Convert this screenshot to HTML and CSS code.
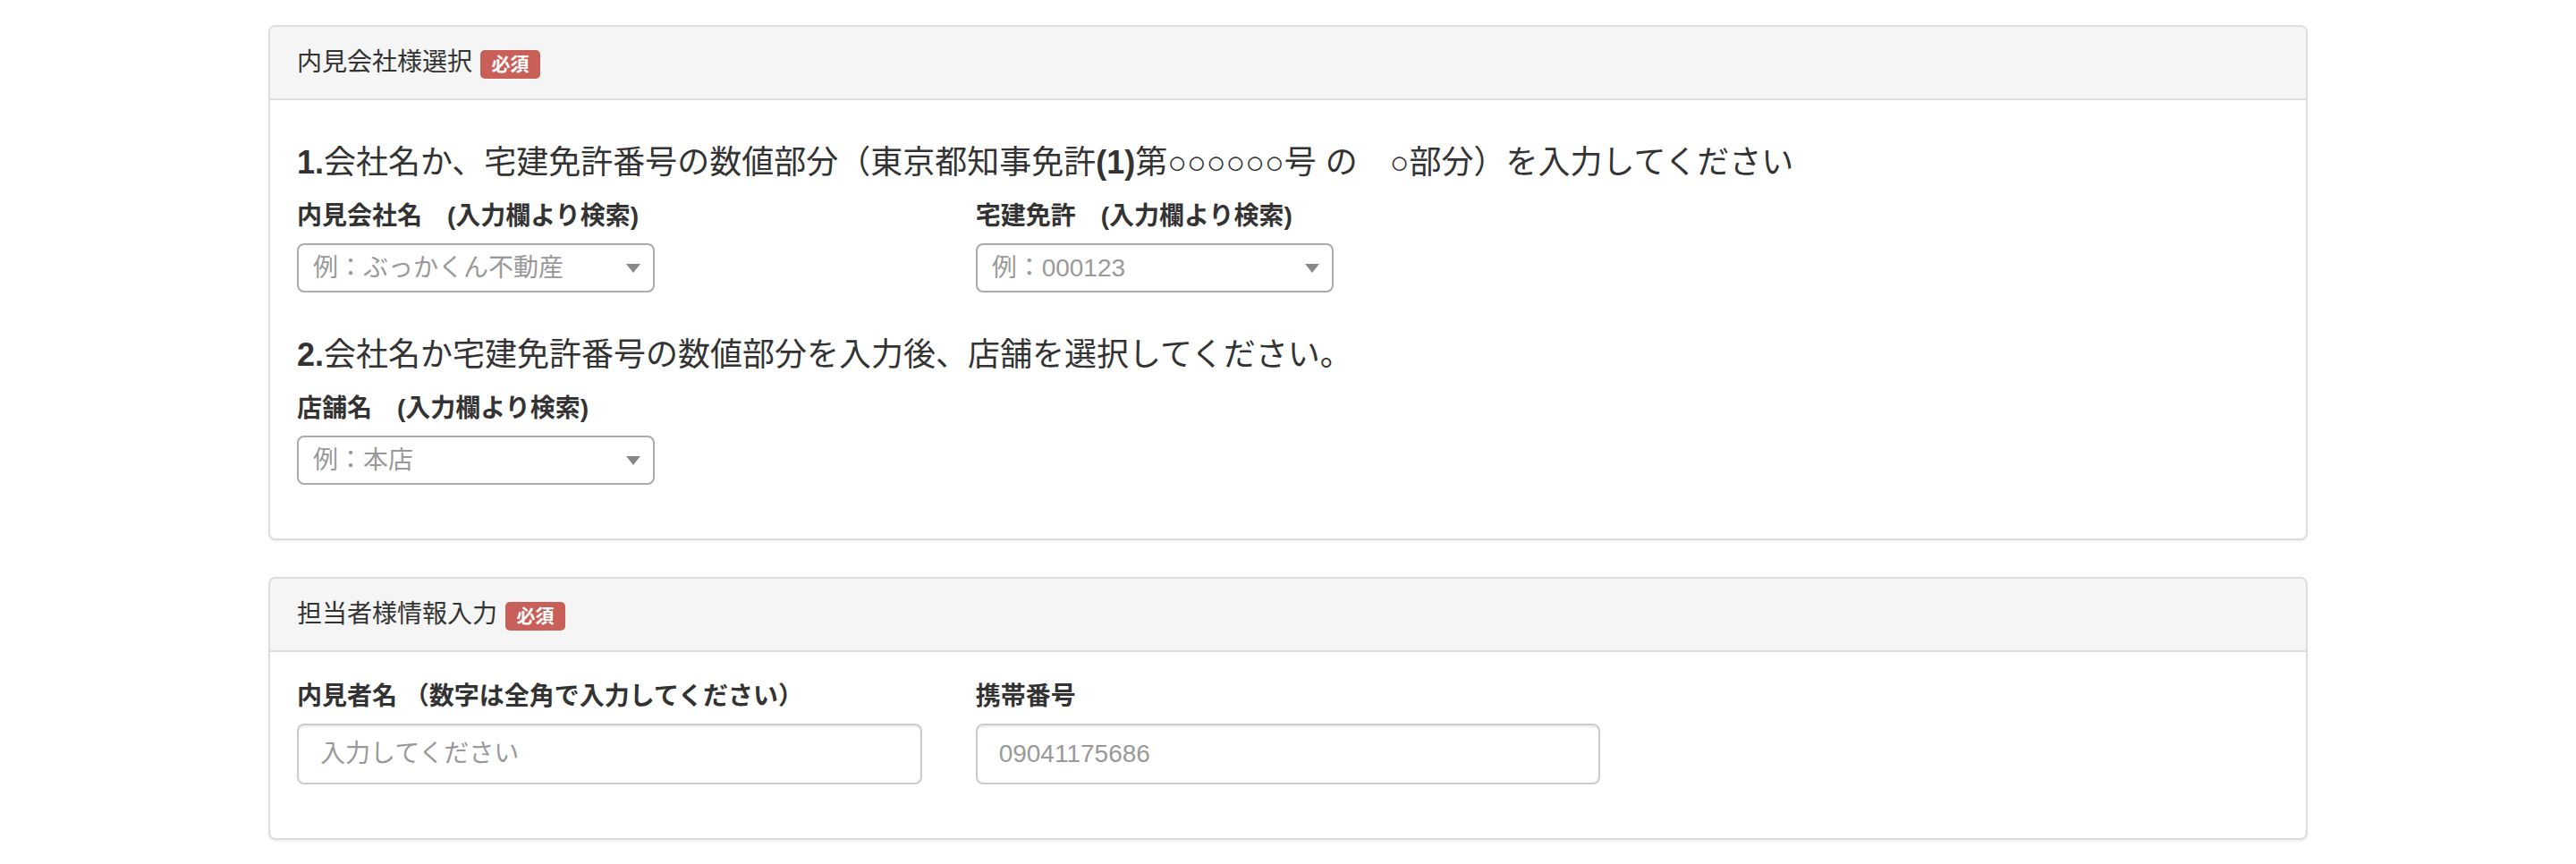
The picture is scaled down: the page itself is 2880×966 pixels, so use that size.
FILE: index.html
```html
<!DOCTYPE html>
<html lang="ja">
<head>
<meta charset="utf-8">
<title>内見予約</title>
<link rel="stylesheet" href="styles.css">
</head>
<body>
<div class="container">
  <section class="panel">
    <div class="panel-heading">
      <span class="panel-title">内見会社様選択</span>
      <span class="badge">必須</span>
    </div>
    <div class="panel-body">
      <h4 class="step"><b class="num">1.</b>会社名か、宅建免許番号の数値部分（東京都知事免許<b class="num">(1)</b>第○○○○○○号 の　○部分）を入力してください</h4>
      <div class="row">
        <div class="form-group">
          <label class="field-label">内見会社名　(入力欄より検索)</label>
          <div class="select"><span class="select-text">例：ぶっかくん不動産</span><span class="select-arrow"></span></div>
        </div>
        <div class="form-group">
          <label class="field-label">宅建免許　(入力欄より検索)</label>
          <div class="select"><span class="select-text">例：000123</span><span class="select-arrow"></span></div>
        </div>
      </div>
      <h4 class="step"><b class="num">2.</b>会社名か宅建免許番号の数値部分を入力後、店舗を選択してください。</h4>
      <div class="row">
        <div class="form-group">
          <label class="field-label">店舗名　(入力欄より検索)</label>
          <div class="select"><span class="select-text">例：本店</span><span class="select-arrow"></span></div>
        </div>
      </div>
    </div>
  </section>

  <section class="panel">
    <div class="panel-heading">
      <span class="panel-title">担当者様情報入力</span>
      <span class="badge">必須</span>
    </div>
    <div class="panel-body">
      <div class="row">
        <div class="form-group">
          <label class="field-label">内見者名 （数字は全角で入力してください）</label>
          <input class="form-control" type="text" placeholder="入力してください">
        </div>
        <div class="form-group">
          <label class="field-label">携帯番号</label>
          <input class="form-control" type="text" placeholder="09041175686">
        </div>
      </div>
    </div>
  </section>
</div>
</body>
</html>
```
FILE: styles.css
```css
html, body {
  margin: 0;
  padding: 0;
  background: #ffffff;
}

body {
  font-family: "Liberation Sans", "Noto Sans CJK JP", sans-serif;
  font-size: 28px;
  line-height: 40px;
  color: #333333;
}

.container {
  width: 2280px;
  margin: 0 auto;
  padding-top: 28px;
}

.panel {
  border: 2px solid #dddddd;
  border-radius: 8px;
  background: #ffffff;
  box-shadow: 0 2px 2px rgba(0, 0, 0, 0.05);
  margin-bottom: 41px;
  overflow: hidden;
}

.panel-heading {
  display: flex;
  align-items: center;
  gap: 9px;
  padding: 20px 30px;
  background: #f5f5f5;
  border-bottom: 2px solid #dddddd;
  color: #333333;
}

.panel-title {
  font-size: 28px;
  line-height: 40px;
}

.badge {
  display: inline-block;
  height: 32px;
  line-height: 32px;
  padding: 0 12.5px;
  margin-top: 3px;
  font-size: 21px;
  font-weight: 700;
  color: #ffffff;
  background: #c95f59;
  border-radius: 5px;
}

.panel-body {
  padding: 30px;
}

.step {
  margin: 20px 0 20px;
  font-size: 36px;
  line-height: 40px;
  font-weight: 400;
  color: #333333;
}

.num {
  font-weight: 700;
}

.row {
  display: grid;
  grid-template-columns: repeat(3, 1fr);
  column-gap: 60px;
}

.form-group {
  margin-bottom: 30px;
}

.field-label {
  display: block;
  margin-bottom: 10px;
  font-size: 28px;
  line-height: 40px;
  font-weight: 700;
  color: #333333;
}

.select {
  display: flex;
  align-items: center;
  justify-content: space-between;
  box-sizing: border-box;
  width: 400px;
  height: 55px;
  padding: 0 14px 0 16px;
  border: 2px solid #aaaaaa;
  border-radius: 8px;
  background: #ffffff;
}

.select-text {
  font-size: 28px;
  line-height: 40px;
  color: #999999;
}

.select-arrow {
  width: 0;
  height: 0;
  border-style: solid;
  border-width: 10px 8px 0 8px;
  border-color: #888888 transparent transparent transparent;
}

.form-control {
  display: block;
  box-sizing: border-box;
  width: 100%;
  height: 68px;
  padding: 12px 24px;
  border: 2px solid #cccccc;
  border-radius: 8px;
  background: #ffffff;
  box-shadow: inset 0 2px 2px rgba(0, 0, 0, 0.075);
  font-family: inherit;
  font-size: 28px;
  line-height: 40px;
  color: #555555;
  outline: none;
}

.form-control::placeholder {
  color: #999999;
  opacity: 1;
}
```
